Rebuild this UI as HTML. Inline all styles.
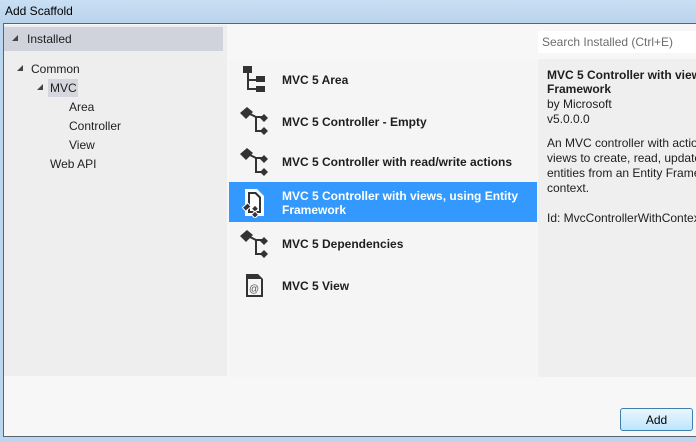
<!DOCTYPE html>
<html><head><meta charset="utf-8"><style>
*{margin:0;padding:0;box-sizing:border-box}
html,body{width:696px;height:442px;overflow:hidden}
body{position:relative;font-family:"Liberation Sans",sans-serif;font-size:12px;color:#1e1e1e;background:#bcd6ee}
.abs{position:absolute}
#title{left:0;top:0;width:696px;height:24px;background:linear-gradient(#c9dff3,#b9d3ec);}
#title span{position:absolute;left:5px;top:4px;font-size:12px;color:#000}
#dlg{left:3px;top:23px;width:693px;height:414px;background:#f7f7f7;border:1px solid #5a6470;border-right:none}
#left{left:4px;top:25px;width:223px;height:351px;background:#eeeeee}
#inst{left:4px;top:27px;width:219px;height:24px;background:#d0d3dc}
.tri{position:absolute;width:0;height:0;border-left:6px solid transparent;border-bottom:6px solid #444}
#mid{left:229px;top:59px;width:308px;height:318px;background:#f5f5f5}
#right{left:538px;top:59px;width:158px;height:318px;background:#efefef;overflow:hidden}
#search{left:538px;top:31px;width:158px;height:22px;background:#fff;color:#6d6d6d;padding:4px 0 0 4px;overflow:hidden;white-space:nowrap}
.item{position:absolute;left:229px;width:308px;height:41px}
.item b{position:absolute;left:53px;font-size:12px}
.sel{background:#3399ff;color:#fff}
.t{position:absolute;white-space:nowrap}
#add{left:620px;top:408px;width:73px;height:23px;border:1px solid #3c7fb1;border-radius:3px;background:linear-gradient(#eaf6fd,#bee6fd);text-align:center;padding-top:4px;color:#000}
</style></head><body>
<div id="title" class="abs"><span>Add Scaffold</span></div>
<div id="dlg" class="abs"></div>
<div id="left" class="abs"></div>
<div id="inst" class="abs"></div>
<div class="tri" style="left:12px;top:35px"></div>
<div class="t" style="left:27px;top:32px">Installed</div>
<div class="tri" style="left:17px;top:65px"></div>
<div class="t" style="left:31px;top:62px">Common</div>
<div class="abs" style="left:48px;top:79px;width:30px;height:18px;background:#d6d6de"></div>
<div class="tri" style="left:37px;top:84px"></div>
<div class="t" style="left:50px;top:81px">MVC</div>
<div class="t" style="left:69px;top:100px">Area</div>
<div class="t" style="left:69px;top:119px">Controller</div>
<div class="t" style="left:69px;top:138px">View</div>
<div class="t" style="left:50px;top:157px">Web API</div>

<div id="mid" class="abs"></div>
<div id="search" class="abs">Search Installed (Ctrl+E)</div>
<div id="right" class="abs">
<div class="t" style="left:9px;top:9px;font-weight:bold;line-height:14px">MVC 5 Controller with views, using Entity<br>Framework</div>
<div class="t" style="left:9px;top:38px;line-height:15px">by Microsoft<br>v5.0.0.0</div>
<div class="t" style="left:9px;top:77px;line-height:15px">An MVC controller with actions and Entity Framework<br>views to create, read, update, delete, and list<br>entities from an Entity Framework data<br>context.</div>
<div class="t" style="left:9px;top:152px">Id: MvcControllerWithContext</div>
</div>

<svg class="abs" style="left:0;top:0" width="696" height="442">
<defs>
<g id="ctl" fill="#333"><polygon points="-7,0 0,-6 6,-1 -1,6"/><path d="M3 1 L9 4 H15 M9 4 V18 H15" stroke="#333" stroke-width="2" fill="none"/><polygon points="17,1 21,5 17,9 13,5"/><polygon points="17,14 21,18 17,22 13,18"/></g>
</defs>
<g fill="#333"><rect x="243" y="66" width="9" height="7"/><path d="M248 73 V89 H256 M248 80 H256" stroke="#333" stroke-width="2" fill="none"/><rect x="256" y="76" width="9" height="6"/><rect x="256" y="86" width="9" height="6"/></g>
<use href="#ctl" x="247" y="113"/>
<use href="#ctl" x="247" y="154"/>
<use href="#ctl" x="247" y="236"/>
<path d="M246 274 H258 L263 279 V297 H246 Z" fill="#333"/><rect x="248" y="279" width="13" height="16" fill="#f5f5f5"/><text x="249" y="292" font-size="10" fill="#555" font-family="Liberation Sans">@</text>
</svg>

<div class="item" style="top:59px"><b style="top:14px">MVC 5 Area</b></div>
<div class="item" style="top:100px"><b style="top:15px">MVC 5 Controller - Empty</b></div>
<div class="item" style="top:141px"><b style="top:14px">MVC 5 Controller with read/write actions</b></div>
<div class="item sel" style="top:182px;height:40px"><b style="top:7px;line-height:14px">MVC 5 Controller with views, using Entity<br>Framework</b>
<svg class="abs" style="left:12px;top:6px" width="28" height="30"><path d="M4 1 H16 L23 8 V28 H4 Z" fill="#fff"/><path d="M7 4 H15 L20 9 V25 H7 Z" fill="#333"/><path d="M9 6 H14 L18 10 V23 H9 Z" fill="#fff"/><g fill="#333" stroke="#fff" stroke-width="1"><rect x="2" y="17" width="7" height="5" transform="rotate(-40 5 19)"/><rect x="12" y="18" width="5" height="5" transform="rotate(45 14 20)"/><rect x="12" y="24" width="5" height="5" transform="rotate(45 14 26)"/></g></svg></div>
<div class="item" style="top:223px"><b style="top:14px">MVC 5 Dependencies</b></div>
<div class="item" style="top:264px"><b style="top:15px">MVC 5 View</b></div>

<div id="add" class="abs">Add</div>
</body></html>
